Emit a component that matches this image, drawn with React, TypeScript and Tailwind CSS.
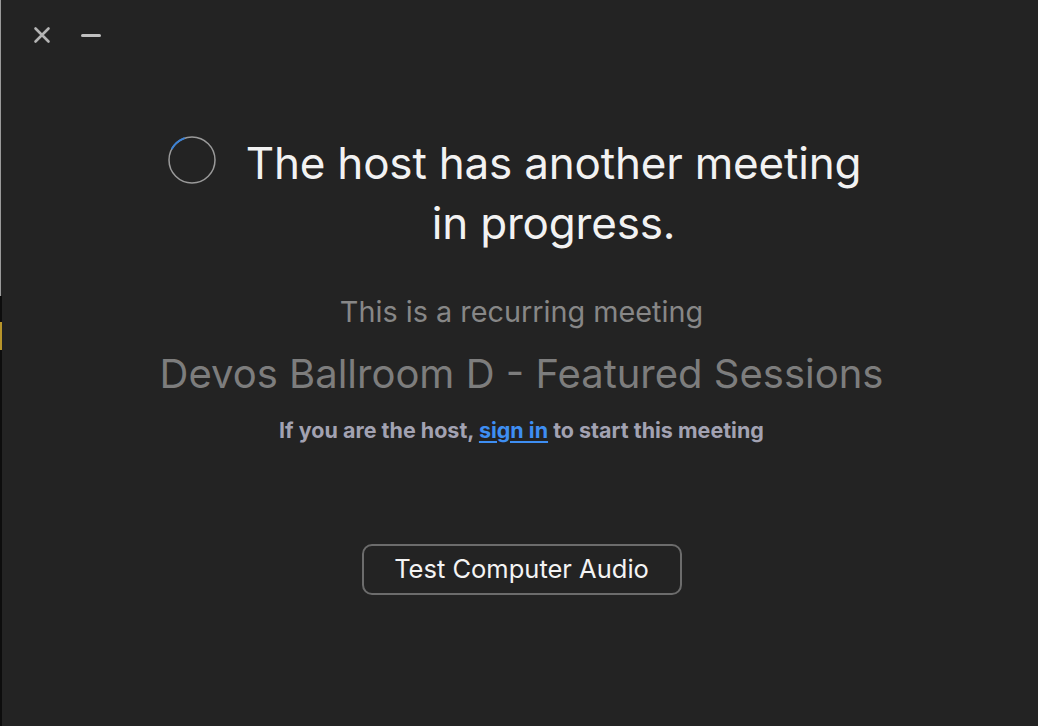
import React from 'react';

function Spinner() {
  return (
    <svg width="50" height="50" viewBox="0 0 50 50" className="shrink-0">
      <circle cx="25" cy="25" r="23" fill="none" stroke="#9a9a9a" strokeWidth="1.5" />
      <path d="M 5.1 13.5 A 23 23 0 0 1 17 3.4" fill="none" stroke="#3b82d6" strokeWidth="2" strokeLinecap="round" />
    </svg>
  );
}

export default function App() {
  return (
    <div
      className="relative h-[726px] w-[1038px] overflow-hidden bg-[#232323]"
      style={{ fontFamily: 'Inter, "Liberation Sans", sans-serif' }}
    >
      {/* window edge */}
      <div className="absolute left-0 top-0 h-[296px] w-px bg-[#9a9a9a]" />
      <div className="absolute left-0 top-[296px] h-[430px] w-[2px] bg-[#0d0d0d]" />
      <div className="absolute left-0 top-[322px] h-[28px] w-[2px] bg-[#b8952a]" />

      {/* title bar */}
      <div className="flex h-[72px] items-center gap-[30px] pl-[33px] pb-[2px]">
        <svg width="18" height="18" viewBox="0 0 18 18">
          <path d="M2.5 2.5 L15.5 15.5 M15.5 2.5 L2.5 15.5" stroke="#b4b4b4" strokeWidth="2.6" strokeLinecap="round" />
        </svg>
        <div className="h-[3px] w-[20px] rounded-full bg-[#c0c0c0]" />
      </div>

      <div className="flex flex-col items-center">
        <div className="mt-[61px] flex items-start gap-[29px] pr-[10px]">
          <div className="pt-[2px]">
            <Spinner />
          </div>
          <h1 className="text-center text-[44px] leading-[60px] font-normal tracking-[-0.2px] text-[#f2f2f2]">
            The host has another meeting
            <br />
            in progress.
          </h1>
        </div>

        <div className="flex flex-col items-center pl-[5px]">
          <p className="mt-[41px] text-[28.8px] leading-[36px] text-[#878787]">This is a recurring meeting</p>
          <p className="mt-[20px] text-[40px] leading-[48px] text-[#7d7d7d]">Devos Ballroom D - Featured Sessions</p>
          <p className="mt-[18px] text-[21.5px] leading-[28px] font-bold text-[#a2a2b2]">
            If you are the host,{' '}
            <a className="text-[#3e8ef2] underline underline-offset-[3px]">sign in</a> to start this meeting
          </p>

          <button className="mt-[100px] h-[51px] w-[320px] rounded-[10px] border-2 border-[#6c6c6c] text-[25.5px] text-[#f4f4f4]">
            Test Computer Audio
          </button>
        </div>
      </div>
    </div>
  );
}
